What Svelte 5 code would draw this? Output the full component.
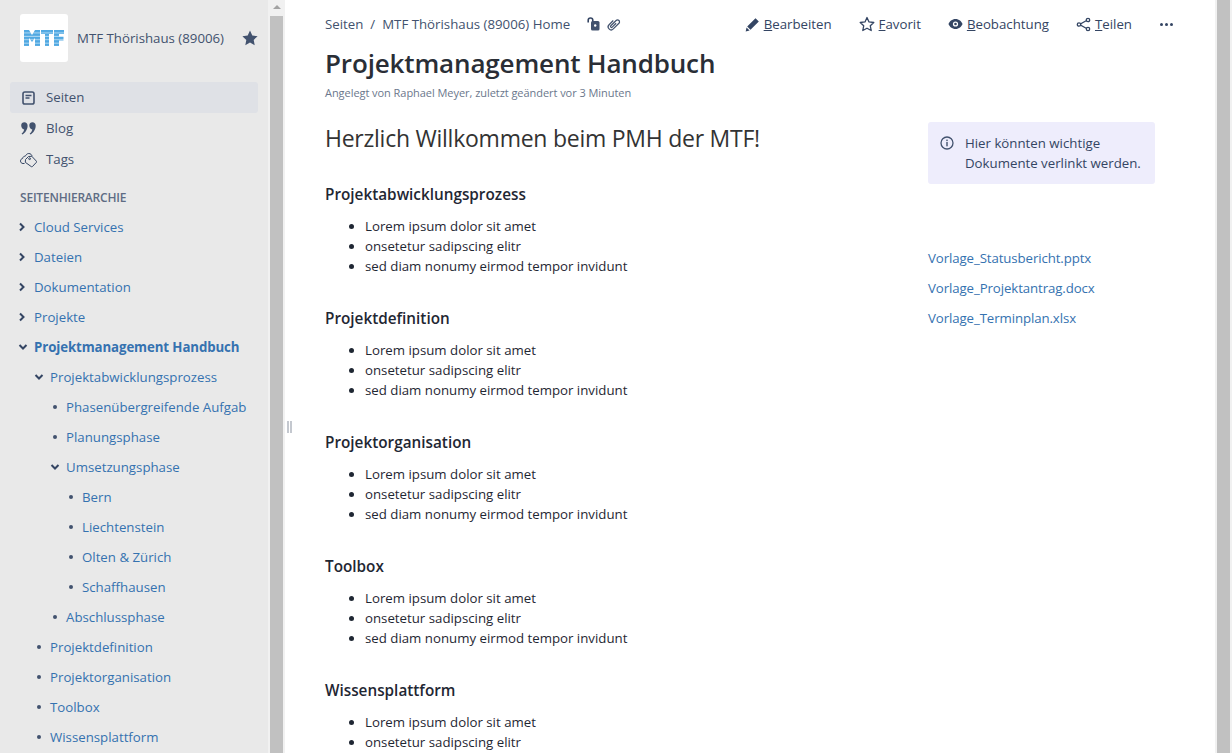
<script lang="ts">
	const tree = [
		{ label: 'Cloud Services', depth: 0, kind: 'closed' },
		{ label: 'Dateien', depth: 0, kind: 'closed' },
		{ label: 'Dokumentation', depth: 0, kind: 'closed' },
		{ label: 'Projekte', depth: 0, kind: 'closed' },
		{ label: 'Projektmanagement Handbuch', depth: 0, kind: 'open', active: true },
		{ label: 'Projektabwicklungsprozess', depth: 1, kind: 'open' },
		{ label: 'Phasenübergreifende Aufgab', depth: 2, kind: 'leaf' },
		{ label: 'Planungsphase', depth: 2, kind: 'leaf' },
		{ label: 'Umsetzungsphase', depth: 2, kind: 'open' },
		{ label: 'Bern', depth: 3, kind: 'leaf' },
		{ label: 'Liechtenstein', depth: 3, kind: 'leaf' },
		{ label: 'Olten & Zürich', depth: 3, kind: 'leaf' },
		{ label: 'Schaffhausen', depth: 3, kind: 'leaf' },
		{ label: 'Abschlussphase', depth: 2, kind: 'leaf' },
		{ label: 'Projektdefinition', depth: 1, kind: 'leaf' },
		{ label: 'Projektorganisation', depth: 1, kind: 'leaf' },
		{ label: 'Toolbox', depth: 1, kind: 'leaf' },
		{ label: 'Wissensplattform', depth: 1, kind: 'leaf' }
	];

	const bullets = ['Lorem ipsum dolor sit amet', 'onsetetur sadipscing elitr', 'sed diam nonumy eirmod tempor invidunt'];
	// the last section runs off the bottom of the window after its second bullet
	const sections = [
		{ title: 'Projektabwicklungsprozess', items: bullets },
		{ title: 'Projektdefinition', items: bullets },
		{ title: 'Projektorganisation', items: bullets },
		{ title: 'Toolbox', items: bullets },
		{ title: 'Wissensplattform', items: bullets.slice(0, 2) }
	];
	const files = ['Vorlage_Statusbericht.pptx', 'Vorlage_Projektantrag.docx', 'Vorlage_Terminplan.xlsx'];
</script>

<div class="page">
	<aside class="sidebar">
		<div class="space">
			<div class="logo">
				<svg width="40" height="16" viewBox="0 0 40 16">
					<defs>
						<pattern id="stripes" width="40" height="3.4" patternUnits="userSpaceOnUse">
							<rect width="40" height="2.5" fill="#50a8e2" />
							<rect y="2.5" width="40" height=".9" fill="#b5dbf3" />
						</pattern>
					</defs>
					<path fill="url(#stripes)" d="M0 16V0h5l3 5 3-5h5v16h-5V8l-3 4-3-4v8zM17 0h12v4h-4v12h-4V4h-4zM30 0h10v4h-5v2.500h4.500v4H35V16h-5z" />
				</svg>
			</div>
			<span class="space-name">MTF Thörishaus (89006)</span>
			<svg class="space-star" width="16" height="16" viewBox="0 0 16 16"><path fill="#42526e" d="M8 .6l2.300 4.900 5.300.7-3.900 3.700 1 5.300L8 12.600l-4.700 2.600 1-5.300L.4 6.200l5.300-.7z" /></svg>
		</div>

		<nav class="main-nav">
			<div class="nav-item selected">
				<span class="nav-icon">
					<svg width="13" height="14" viewBox="0 0 13 14"><rect x="1" y="1" width="11" height="12" rx="1.800" fill="none" stroke="#42526e" stroke-width="1.600" /><path stroke="#42526e" stroke-width="1.500" d="M3.500 4.500h6M3.500 7h4" /></svg>
				</span>
				Seiten
			</div>
			<div class="nav-item">
				<span class="nav-icon">
					<svg width="15" height="13" viewBox="0 0 15 13"><path fill="#42526e" d="M.2 3.300C.2 1.400 1.600.2 3.300.2c2 0 3.300 1.500 3.300 3.500 0 3.900-2.500 7.300-5.300 8.800l-.7-1c1.400-1.100 2.400-2.600 2.600-4.100C1.200 7.300.2 5.500.2 3.300zM8.300 3.300C8.300 1.400 9.700.2 11.400.2c2 0 3.300 1.500 3.300 3.500 0 3.900-2.500 7.300-5.300 8.800l-.7-1c1.400-1.100 2.400-2.600 2.600-4.100-2-.1-3-1.900-3-4.100z" /></svg>
				</span>
				Blog
			</div>
			<div class="nav-item">
				<span class="nav-icon">
					<svg width="17" height="16" viewBox="0 0 17 16" fill="none" stroke="#344563" stroke-width="1"><path d="M4.500 11.500H3C1.500 11.500.5 10.300.5 9c0-1.300.9-2.300 2.100-2.500C2.800 5 4 4 5.200 4.300 6 2.700 7.200 1.500 8.800 1.500c1.700 0 3 1.200 3.300 2.700" /><path d="M5.500 7.500L8.500 4.500l3.300-.2 4.700 5-.1 1-4 4.300-1 .1L5.300 10.300z" /><circle cx="9.600" cy="6.700" r=".9" /></svg>
				</span>
				Tags
			</div>
		</nav>

		<div class="tree-title">SEITENHIERARCHIE</div>
		<ul class="tree">
			{#each tree as node}
				<li class="tree-row" class:active={node.active} style="padding-left: {16 * node.depth}px">
					<span class="twisty">
						{#if node.kind === 'closed'}
							<svg width="8" height="10" viewBox="0 0 8 10"><path d="M2 1.500L5.500 5 2 8.500" fill="none" stroke="#344563" stroke-width="2" /></svg>
						{:else if node.kind === 'open'}
							<svg width="10" height="8" viewBox="0 0 10 8"><path d="M1.500 2L5 5.500 8.500 2" fill="none" stroke="#344563" stroke-width="2" /></svg>
						{:else}
							<i class="dot"></i>
						{/if}
					</span>
					<span class="tree-label">{node.label}</span>
				</li>
			{/each}
		</ul>
	</aside>

	<div class="side-scroll">
		<div class="scroll-up"><i></i></div>
		<div class="scroll-thumb"></div>
	</div>

	<div class="splitter"><i></i><i></i></div>

	<main class="content">
		<header class="topbar">
			<div class="crumbs">
				<span>Seiten</span><span class="sep">/</span><span>MTF Thörishaus (89006) Home</span>
				<svg class="crumb-lock" width="13" height="14" viewBox="0 0 13 14"><path d="M1.200 5.500V3.300a2.300 2.300 0 0 1 4.600 0V5" fill="none" stroke="#344563" stroke-width="1.600" /><rect x="4" y="4" width="8.500" height="9.500" rx="1.500" fill="#42526e" /><circle cx="8.200" cy="8.500" r="1.200" fill="#fff" /></svg>
				<svg class="crumb-clip" width="16" height="16" viewBox="0 0 16 16"><path transform="rotate(45 8 8)" d="M5 6v6a3 3 0 0 0 6 0V4a2 2 0 0 0-4 0v7.500a1 1 0 0 0 2 0V6" fill="none" stroke="#42526e" stroke-width="1.200" /></svg>
			</div>
			<div class="actions">
				<span class="action">
					<svg width="15" height="15" viewBox="0 0 15 15"><path fill="#344563" d="M10.500 1.200l3.300 3.200-8.300 8.300-3.300-3.300zM1.500 10.400l3.100 3.100-3.900.9z" /></svg>
					<span><u>B</u>earbeiten</span>
				</span>
				<span class="action">
					<svg width="16" height="16" viewBox="0 0 16 16"><path fill="none" stroke="#344563" stroke-width="1.300" stroke-linejoin="round" d="M8 1.500l2 4.400 4.800.6-3.500 3.300.9 4.700L8 12.200l-4.200 2.300.9-4.700L1.200 6.500 6 5.900z" /></svg>
					<span><u>F</u>avorit</span>
				</span>
				<span class="action">
					<svg width="15" height="12" viewBox="0 0 15 12"><path fill="#344563" d="M7.500 1C11 1 13.600 3.600 14.500 6 13.600 8.400 11 11 7.500 11S1.400 8.400.5 6C1.400 3.600 4 1 7.500 1z" /><circle cx="7.500" cy="6" r="2.600" fill="#fff" /><circle cx="7.500" cy="6" r="1.300" fill="#344563" /></svg>
					<span><u>B</u>eobachtung</span>
				</span>
				<span class="action">
					<svg width="15" height="15" viewBox="0 0 15 15" fill="none" stroke="#344563" stroke-width="1.300"><path d="M11.500 3L3.500 7.500l8 4.500" /><circle cx="3" cy="7.500" r="1.700" fill="#fff" /><circle cx="12" cy="3" r="1.700" fill="#fff" /><circle cx="12" cy="12" r="1.700" fill="#fff" /></svg>
					<span><u>T</u>eilen</span>
				</span>
				<span class="more"><i></i><i></i><i></i></span>
			</div>
		</header>

		<h1>Projektmanagement Handbuch</h1>
		<p class="byline">Angelegt von Raphael Meyer, zuletzt geändert vor 3 Minuten</p>

		<div class="columns">
			<div class="body">
				<h2>Herzlich Willkommen beim PMH der MTF!</h2>
				{#each sections as section}
					<section>
						<h3>{section.title}</h3>
						<ul>
							{#each section.items as b}
								<li>{b}</li>
							{/each}
						</ul>
					</section>
				{/each}
			</div>
			<div class="aside">
				<div class="panel">
					<svg width="14" height="14" viewBox="0 0 14 14"><circle cx="7" cy="7" r="6" fill="none" stroke="#42526e" stroke-width="1.300" /><rect x="6.300" y="6" width="1.400" height="4.300" fill="#42526e" /><rect x="6.300" y="3.600" width="1.400" height="1.500" fill="#42526e" /></svg>
					<p>Hier könnten wichtige Dokumente verlinkt werden.</p>
				</div>
				<div class="files">
					{#each files as f}
						<a href="#top">{f}</a>
					{/each}
				</div>
			</div>
		</div>
	</main>

	<div class="page-scroll"><div class="scroll-thumb"></div></div>
</div>

<style>
	:global(body) {
		margin: 0;
		overflow: hidden;
	}

	.page {
		display: flex;
		width: 1232px;
		height: 753px;
		overflow: hidden;
		background: #fff;
		color: #1f2733;
		font-family: 'Open Sans', sans-serif;
		font-size: 13.25px;
	}

	.sidebar {
		width: 268px;
		flex: none;
		background: #e9e9e9;
		box-sizing: border-box;
		overflow: hidden;
		color: #42526e;
	}

	.space {
		display: flex;
		align-items: center;
		height: 48px;
		margin: 14px 0 20px 20px;
	}

	.logo {
		width: 48px;
		height: 48px;
		flex: none;
		background: #fff;
		border-radius: 3px;
		display: flex;
		align-items: center;
		justify-content: center;
	}

	.space-name {
		margin-left: 9px;
		white-space: nowrap;
		width: 165px;
	}

	.space-star {
		flex: none;
	}

	.main-nav {
		margin: 0 10px;
		width: 248px;
	}

	.nav-item {
		display: flex;
		align-items: center;
		height: 31px;
		box-sizing: border-box;
		padding: 0 0 2px 10px;
		gap: 9px;
		border-radius: 3px;
	}

	.nav-icon {
		width: 17px;
		flex: none;
		display: flex;
		justify-content: center;
		padding-top: 2px;
	}

	.nav-item.selected {
		background: #dfe1e6;
	}

	.tree-title {
		margin: 15px 0 0 20px;
		font-size: 12px;
		font-weight: 600;
		line-height: 16px;
		letter-spacing: -0.2px;
		color: #5e6c84;
	}

	.tree {
		list-style: none;
		margin: 6px 0 0 18px;
		padding: 0;
		width: 229px;
		overflow: hidden;
	}

	.tree-row {
		display: flex;
		align-items: center;
		height: 30px;
		white-space: nowrap;
		color: #3572b0;
	}

	.tree-row.active .tree-label {
		font-weight: 700;
		letter-spacing: -0.1px;
	}

	.twisty {
		width: 16px;
		flex: none;
		display: flex;
		align-items: center;
	}

	.twisty svg {
		display: block;
	}

	.dot {
		width: 4px;
		height: 4px;
		margin-left: 3px;
		border-radius: 50%;
		background: #42526e;
	}

	.side-scroll {
		width: 17px;
		flex: none;
		background: #f1f1f1;
	}

	.scroll-up {
		height: 16px;
		display: flex;
		justify-content: center;
		padding-top: 5px;
		box-sizing: border-box;
	}

	.scroll-up i {
		width: 0;
		height: 0;
		border: 4px solid transparent;
		border-top: 0;
		border-bottom: 4px solid #a3a3a3;
	}

	.scroll-thumb {
		width: 13px;
		height: 100%;
		margin: 0 2px;
		background: #c1c1c1;
	}

	.splitter {
		width: 8px;
		flex: none;
		display: flex;
		gap: 1.5px;
		align-items: center;
		box-sizing: border-box;
		padding: 101px 0 0 2px;
	}

	.splitter i {
		width: 1.5px;
		height: 12px;
		background: #c4c8cf;
		flex: none;
	}

	.content {
		flex: 1;
		padding: 0 0 0 32px;
		min-width: 0;
		overflow: hidden;
	}

	.topbar {
		display: flex;
		align-items: center;
		justify-content: space-between;
		height: 48px;
		width: 848px;
	}

	.crumbs {
		display: flex;
		align-items: center;
		color: #42526e;
		white-space: nowrap;
	}

	.sep {
		margin: 0 7px;
	}

	.crumb-lock {
		margin: 0 6px 0 17px;
	}

	.actions {
		display: flex;
		align-items: center;
		gap: 27px;
		color: #344563;
	}

	.action {
		display: flex;
		align-items: center;
		gap: 4px;
		white-space: nowrap;
	}

	.more {
		display: flex;
		gap: 2px;
		margin-left: 1px;
	}

	.more i {
		width: 3px;
		height: 3px;
		border-radius: 50%;
		background: #344563;
	}

	h1 {
		margin: -1px 0 0;
		font-size: 26px;
		line-height: 32px;
		font-weight: 600;
		letter-spacing: -0.15px;
		color: #2a2e36;
	}

	.byline {
		margin: 6px 0 0;
		font-size: 11px;
		line-height: 16px;
		letter-spacing: -0.05px;
		color: #6b778c;
	}

	.columns {
		display: flex;
		margin-top: 21px;
	}

	.body {
		width: 603px;
		flex: none;
	}

	h2 {
		margin: 0;
		font-size: 23px;
		line-height: 32px;
		font-weight: 400;
		letter-spacing: -0.25px;
		color: #333;
	}

	section {
		height: 124px;
	}

	h2 + section {
		margin-top: 30px;
	}

	h3 {
		margin: 0;
		font-size: 15.3px;
		line-height: 20px;
		font-weight: 600;
		color: #1f2733;
	}

	section ul {
		margin: 12px 0 0;
		padding: 0 0 0 40px;
	}

	section li {
		line-height: 20px;
		height: 20px;
	}

	.panel {
		display: flex;
		align-items: flex-start;
		gap: 11px;
		width: 227px;
		height: 62px;
		box-sizing: border-box;
		padding: 11px 12px;
		background: #eeedfc;
		border-radius: 3px;
		color: #344563;
	}

	.panel svg {
		flex: none;
		margin-top: 3px;
	}

	.panel p {
		margin: 0;
		line-height: 20px;
	}

	.files {
		display: flex;
		flex-direction: column;
		gap: 10px;
		margin-top: 64px;
	}

	.files a {
		color: #3572b0;
		text-decoration: none;
		line-height: 20px;
		letter-spacing: -0.1px;
	}

	.page-scroll {
		width: 17px;
		flex: none;
		background: #f1f1f1;
	}
</style>
